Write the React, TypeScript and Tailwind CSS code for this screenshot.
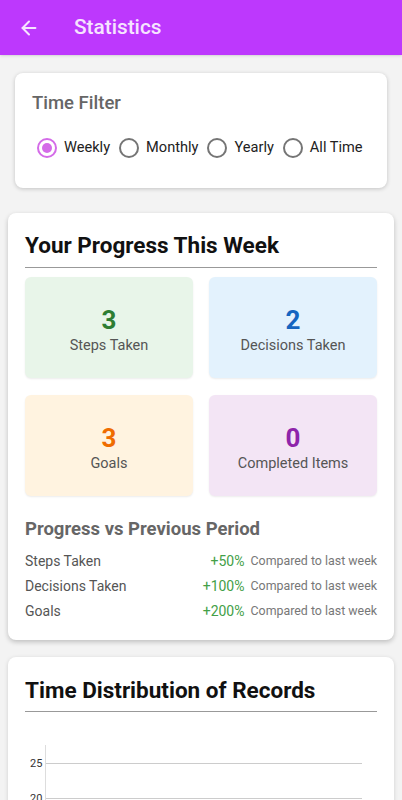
import { ArrowLeft } from 'lucide-react';

const filters = ['Weekly', 'Monthly', 'Yearly', 'All Time'];

const stats = [
  { value: '3', label: 'Steps Taken', box: 'bg-[#e8f5e9]', num: 'text-[#2e7d32]' },
  { value: '2', label: 'Decisions Taken', box: 'bg-[#e3f2fd]', num: 'text-[#1565c0]' },
  { value: '3', label: 'Goals', box: 'bg-[#fff3e0]', num: 'text-[#ef6c00]' },
  { value: '0', label: 'Completed Items', box: 'bg-[#f3e5f5]', num: 'text-[#8e24aa]' },
];

const changes = [
  { label: 'Steps Taken', pct: '+50%' },
  { label: 'Decisions Taken', pct: '+100%' },
  { label: 'Goals', pct: '+200%' },
];

const Radio = ({ checked }: { checked: boolean }) => (
  <span
    className={
      checked
        ? 'flex h-[20px] w-[20px] items-center justify-center rounded-full border-2 border-[#d46be8]'
        : 'flex h-[20px] w-[20px] items-center justify-center rounded-full border-2 border-[#757575]'
    }
  >
    {checked && <span className="h-[10px] w-[10px] rounded-full bg-[#d46be8]" />}
  </span>
);

export default function App() {
  return (
    <div
      className="min-h-[800px] bg-[#f3f3f3]"
      style={{ fontFamily: 'Roboto, "Noto Sans", sans-serif' }}
    >
      <header className="flex h-[55px] items-center bg-[#bd38fd] px-[18px] shadow-sm">
        <ArrowLeft className="h-[22px] w-[22px] text-[#f6e4ff]" strokeWidth={2.2} />
        <h1 className="ml-[34px] text-[20.8px] font-medium text-[#f6e4ff]">Statistics</h1>
      </header>

      <section className="mx-[15px] mt-[18px] h-[115px] rounded-[8px] bg-white px-[17px] pt-[18px] shadow-[0_1px_4px_rgba(0,0,0,0.2)]">
        <h2 className="text-[18.5px] font-medium leading-[24px] text-[#666]">Time Filter</h2>
        <div className="mt-[22px] flex items-center gap-[9px] pl-[5px]">
          {filters.map((f, i) => (
            <label key={f} className="flex items-center gap-[7px]">
              <Radio checked={i === 0} />
              <span className="text-[14.6px] text-[#222]">{f}</span>
            </label>
          ))}
        </div>
      </section>

      <section className="mx-[8px] mt-[25px] rounded-[8px] bg-white px-[17px] pb-[16px] pt-[19px] shadow-[0_2px_5px_rgba(0,0,0,0.22)]">
        <h2 className="text-[22.5px] font-bold leading-[26px] text-[#111]">Your Progress This Week</h2>
        <div className="mt-[9px] border-b border-[#999]" />
        <div className="mt-[9px] grid grid-cols-2 gap-x-[16px] gap-y-[17px]">
          {stats.map((s) => (
            <div
              key={s.label}
              className={`flex h-[101px] flex-col items-center justify-center rounded-[6px] pt-[8px] ${s.box} shadow-[0_1px_2px_rgba(0,0,0,0.08)]`}
            >
              <span className={`text-[26px] font-bold leading-[28px] ${s.num}`}>{s.value}</span>
              <span className="mt-[1px] text-[14.5px] text-[#555]">{s.label}</span>
            </div>
          ))}
        </div>
        <h3 className="mt-[21px] text-[18.5px] font-bold leading-[24px] text-[#666]">Progress vs Previous Period</h3>
        <div className="mt-[8px] flex flex-col">
          {changes.map((c) => (
            <div key={c.label} className="flex h-[25px] items-center justify-between">
              <span className="text-[14px] text-[#555]">{c.label}</span>
              <span className="flex items-center gap-[6px]">
                <span className="text-[14px] text-[#43a047]">{c.pct}</span>
                <span className="text-[12.4px] text-[#777]">Compared to last week</span>
              </span>
            </div>
          ))}
        </div>
      </section>

      <section className="mx-[8px] mt-[17px] h-[200px] rounded-[8px] bg-white px-[17px] pt-[20px] shadow-[0_1px_4px_rgba(0,0,0,0.15)]">
        <h2 className="text-[22.5px] font-bold leading-[26px] text-[#111]">Time Distribution of Records</h2>
        <div className="mt-[8px] border-b border-[#999]" />
        <div className="relative mt-[33px] h-[120px]">
          <div className="absolute left-[20px] top-0 h-full border-l border-[#ddd]" />
          <div className="absolute left-[5px] top-[13px] text-[11px] leading-[12px] text-[#333]">25</div>
          <div className="absolute left-[21px] right-[15px] top-[18px] border-t border-[#ccc]" />
          <div className="absolute left-[5px] top-[48px] text-[11px] leading-[12px] text-[#333]">20</div>
          <div className="absolute left-[21px] right-[15px] top-[53px] border-t border-[#ccc]" />
        </div>
      </section>
    </div>
  );
}
